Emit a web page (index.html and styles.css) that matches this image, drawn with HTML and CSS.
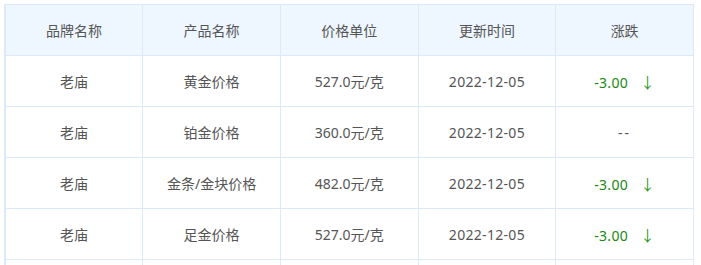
FILE: index.html
```html
<!DOCTYPE html>
<html lang="zh">
<head>
<meta charset="utf-8">
<link rel="stylesheet" href="styles.css">
</head>
<body>
<table class="price-table">
  <thead>
    <tr><th>品牌名称</th><th>产品名称</th><th>价格单位</th><th>更新时间</th><th>涨跌</th></tr>
  </thead>
  <tbody>
    <tr><td>老庙</td><td>黄金价格</td><td>527.0元/克</td><td class="date">2022-12-05</td><td><span class="down">-3.00</span><span class="arrow">↓</span></td></tr>
    <tr><td>老庙</td><td>铂金价格</td><td>360.0元/克</td><td class="date">2022-12-05</td><td class="none">--</td></tr>
    <tr><td>老庙</td><td>金条/金块价格</td><td>482.0元/克</td><td class="date">2022-12-05</td><td><span class="down">-3.00</span><span class="arrow">↓</span></td></tr>
    <tr><td>老庙</td><td>足金价格</td><td>527.0元/克</td><td class="date">2022-12-05</td><td><span class="down">-3.00</span><span class="arrow">↓</span></td></tr>
    <tr class="more"><td></td><td></td><td></td><td></td><td></td></tr>
  </tbody>
</table>
</body>
</html>
```

FILE: styles.css
```css
html, body {
  margin: 0;
  padding: 0;
  background: #fff;
  overflow: hidden;
}
body {
  padding: 4px 0 0 4px;
  font-family: "Noto Sans", "Noto Sans CJK SC", sans-serif;
  font-size: 14px;
  color: #555;
}
.price-table {
  border-collapse: collapse;
  width: 690px;
  table-layout: fixed;
  border-left: 2px solid #dce9fa;
}
.price-table th,
.price-table td {
  border: 1px solid #dce9fa;
  height: 50px;
  padding: 0;
  text-align: center;
  font-weight: normal;
  vertical-align: middle;
}
.price-table th {
  background: #eef6ff;
  color: #555;
}
.date {
  letter-spacing: 0.3px;
}
.none {
  letter-spacing: 2px;
}
.down {
  color: #18880f;
  letter-spacing: 0.3px;
}
.arrow {
  color: #2a9a2a;
  margin-left: 12px;
  font-size: 15px;
}
```
